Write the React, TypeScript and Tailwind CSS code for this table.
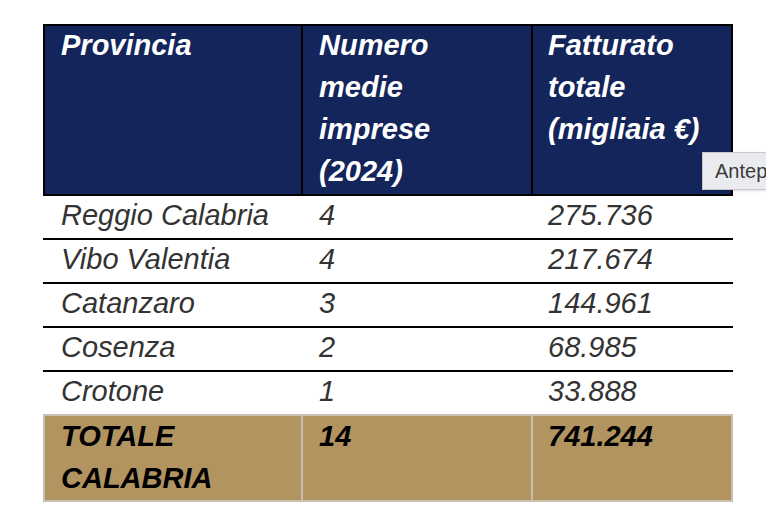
import React from 'react';

type Row = { province: string; count: string; revenue: string };

const rows: Row[] = [
  { province: 'Reggio Calabria', count: '4', revenue: '275.736' },
  { province: 'Vibo Valentia', count: '4', revenue: '217.674' },
  { province: 'Catanzaro', count: '3', revenue: '144.961' },
  { province: 'Cosenza', count: '2', revenue: '68.985' },
  { province: 'Crotone', count: '1', revenue: '33.888' },
];

const font = { fontFamily: '"Liberation Sans", Arial, Helvetica, sans-serif' };

export default function App() {
  return (
    <div className="relative w-[766px] h-[524px] overflow-hidden bg-white" style={font}>
      <div className="pt-[24px] pl-[43px]">
        <div className="w-[690px]">
          {/* intestazione */}
          <div className="grid grid-cols-[256px_2px_228px_2px_198px] border-2 border-black bg-[#13255b] text-white font-bold italic text-[29px] leading-[42px]">
            <div className="pl-[16px] -mt-[2px]">Provincia</div>
            <div className="bg-black" />
            <div className="pl-[16px] -mt-[2px] pb-[2px]">
              Numero
              <br />
              medie
              <br />
              imprese
              <br />
              (2024)
            </div>
            <div className="bg-black" />
            <div className="pl-[15px] -mt-[2px]">
              Fatturato
              <br />
              totale
              <br />
              (migliaia €)
            </div>
          </div>

          {/* righe */}
          {rows.map((row, i) => (
            <div
              key={row.province}
              className={
                'grid grid-cols-[258px_230px_1fr] italic text-[29px] leading-[38px] pb-[4px] text-[#333333] ' +
                (i < rows.length - 1 ? 'border-b-2 border-black' : '')
              }
            >
              <div className="pl-[18px]">{row.province}</div>
              <div className="pl-[18px]">{row.count}</div>
              <div className="pl-[17px]">{row.revenue}</div>
            </div>
          ))}

          {/* totale */}
          <div className="grid grid-cols-[256px_2px_228px_2px_198px] border-2 border-[#c9bfae] bg-[#b29461] text-black font-bold italic text-[29px] leading-[42px]">
            <div className="pl-[16px] -mt-[1px] pb-[1px]">
              TOTALE
              <br />
              CALABRIA
            </div>
            <div className="bg-[#c9bfae]" />
            <div className="pl-[16px] -mt-[1px]">14</div>
            <div className="bg-[#c9bfae]" />
            <div className="pl-[15px] -mt-[1px]">741.244</div>
          </div>
        </div>
      </div>

      {/* tooltip */}
      <div className="absolute left-[702px] top-[152px] h-[38px] w-[120px] border border-[#c8c8c8] bg-[#e9ebee] pl-[12px] text-[20px] leading-[36px] text-[#3a3a3a] shadow-sm">
        Antep
      </div>
    </div>
  );
}
